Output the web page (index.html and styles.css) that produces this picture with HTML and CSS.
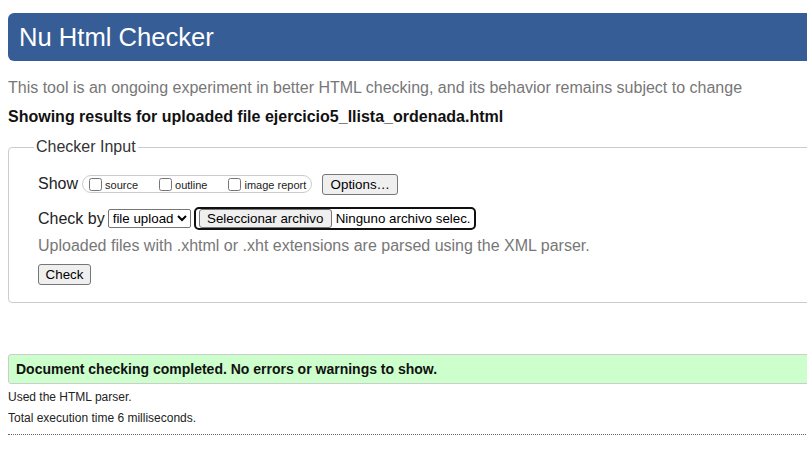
FILE: index.html
```html
<!DOCTYPE html>
<html lang="en">
<head>
<meta charset="utf-8">
<title>Nu Html Checker</title>
<link rel="stylesheet" href="styles.css">
</head>
<body>
<div class="page">
  <h1 class="banner">Nu Html Checker</h1>
  <p class="intro">This tool is an ongoing experiment in better HTML checking, and its behavior remains subject to change</p>
  <p class="showing">Showing results for uploaded file ejercicio5_llista_ordenada.html</p>
  <fieldset class="input">
    <legend>Checker Input</legend>
    <div class="row row-show">
      <span class="lbl">Show</span>
      <span class="pill">
        <label class="opt"><input type="checkbox"><span>source</span></label>
        <label class="opt"><input type="checkbox"><span>outline</span></label>
        <label class="opt"><input type="checkbox"><span>image report</span></label>
      </span>
      <button class="btn btn-options" type="button">Options…</button>
    </div>
    <div class="row row-check">
      <span class="lbl">Check by</span>
      <select class="sel"><option>file upload</option></select>
      <span class="file">
        <button class="btn btn-file" type="button">Seleccionar archivo</button>
        <span class="file-name">Ninguno archivo selec.</span>
      </span>
    </div>
    <p class="note">Uploaded files with .xhtml or .xht extensions are parsed using the XML parser.</p>
    <div class="row-submit"><button class="btn btn-check" type="button">Check</button></div>
  </fieldset>
  <p class="success">Document checking completed. No errors or warnings to show.</p>
  <p class="meta first">Used the HTML parser.</p>
  <p class="meta">Total execution time 6 milliseconds.</p>
  <hr class="dots">
</div>
</body>
</html>
```
FILE: styles.css
```css
html { overflow: hidden; }
body {
  margin: 0;
  font-family: "Liberation Sans", Arial, sans-serif;
  color: #111;
  background: #fff;
}
.page {
  width: 880px;
  padding-left: 8px;
}
.banner {
  margin: 13px 0 0;
  height: 48px;
  line-height: 48px;
  background: #365d95;
  color: #fff;
  border-radius: 6px;
  padding-left: 11px;
  font-size: 25.6px;
  font-weight: normal;
}
.intro {
  margin: 17px 0 0;
  font-size: 16px;
  line-height: 20px;
  color: #777;
}
.showing {
  margin: 9px 0 0;
  font-size: 16px;
  line-height: 20px;
  font-weight: bold;
  color: #111;
}
.input {
  margin: 10px 0 0;
  padding: 0 0 17px 29px;
  border: 1px solid #ccc;
  border-radius: 4px;
}
.input legend {
  margin-left: -4px;
  padding: 0 2px;
  font-size: 16px;
  line-height: 20px;
  color: #333;
}
.row {
  display: flex;
  align-items: center;
}
.lbl {
  font-size: 16px;
  color: #222;
}
.row-show {
  margin-top: 16px;
  height: 22px;
}
.pill {
  display: flex;
  align-items: center;
  height: 16px;
  margin-left: 4px;
  padding: 0 5px 0 2px;
  border: 1px solid #ccc;
  border-radius: 9px;
}
.opt {
  display: flex;
  align-items: center;
  font-size: 11px;
  color: #222;
  margin-right: 17px;
}
.opt span { padding-top: 2px; }
.opt:last-child { margin-right: 0; }
.opt input {
  margin: 0 3px 0 4px;
  width: 13px;
  height: 13px;
}
.btn {
  font-family: "Liberation Sans", Arial, sans-serif;
  font-size: 13.33px;
  color: #000;
  background: #efefef;
  border: 1px solid #767676;
  border-radius: 3px;
  padding: 0 6px;
  height: 21px;
  line-height: 19px;
}
.btn-options {
  margin-left: 10px;
  width: 76px;
  padding: 0;
}
.row-check {
  margin-top: 12px;
  height: 23px;
}
.sel {
  margin-left: 3px;
  width: 83px;
  height: 19px;
  font-family: "Liberation Sans", Arial, sans-serif;
  font-size: 13.33px;
  color: #000;
  border: 1px solid #767676;
  border-radius: 2px;
  background: #fff;
  padding: 0;
}
.file {
  display: flex;
  align-items: center;
  margin-left: 3px;
  height: 19px;
  width: 275px;
  border: 2px solid #101010;
  border-radius: 5px;
  padding-left: 3px;
}
.btn-file {
  width: 133px;
  height: 19px;
  line-height: 17px;
  padding: 0;
}
.file-name {
  margin-left: 4px;
  font-size: 13.33px;
  color: #000;
}
.note {
  margin: 6px 0 0;
  font-size: 16px;
  line-height: 20px;
  color: #777;
}
.row-submit {
  margin-top: 8px;
  height: 21px;
}
.btn-check {
  width: 53px;
  padding: 0;
}
.success {
  margin: 51px 0 0;
  height: 28px;
  line-height: 28px;
  padding-left: 7px;
  background: #ccffcc;
  border: 1px solid #ccc;
  border-radius: 3px;
  font-size: 14px;
  font-weight: bold;
  color: #111;
}
.meta {
  margin: 0;
  font-size: 12px;
  line-height: 21px;
  color: #222;
}
.meta.first { margin-top: 3px; }
.dots {
  margin: 5px 0 0;
  border: 0;
  border-top: 1px dotted #666;
  height: 0;
}
```
